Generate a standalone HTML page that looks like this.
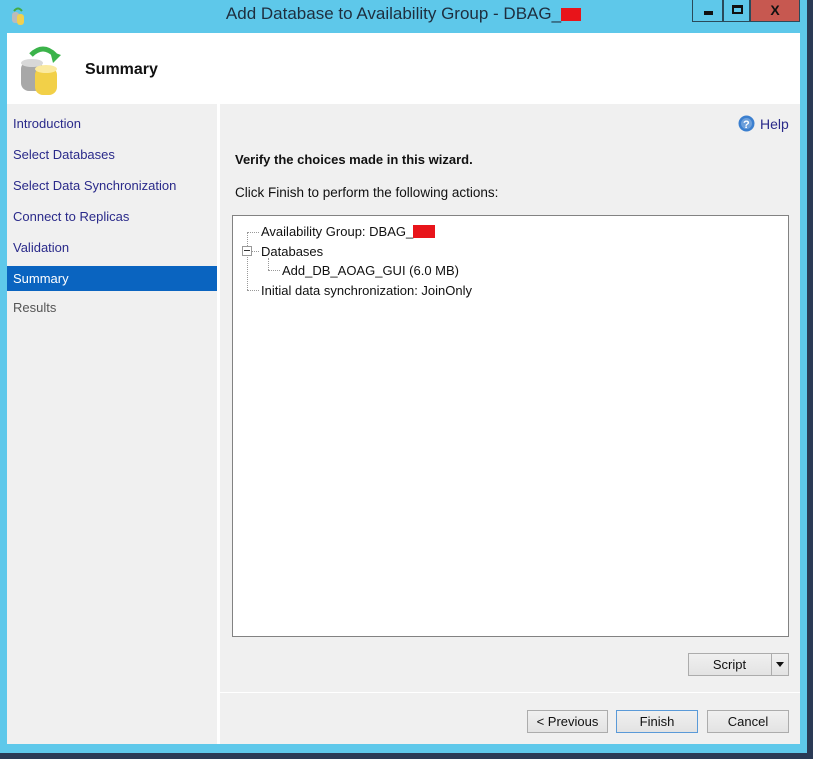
<!DOCTYPE html>
<html><head><meta charset="utf-8"><style>
*{margin:0;padding:0;box-sizing:border-box}
body{width:813px;height:759px;overflow:hidden;background:#2a3a55;font-family:"Liberation Sans",sans-serif;position:relative}
.win{position:absolute;left:0;top:0;width:807px;height:753px;background:#5ec8ea}
.title{position:absolute;left:0;top:4px;width:807px;text-align:center;font-size:17px;color:#1e2e3e}
.red{display:inline-block;background:#e8141a;vertical-align:middle}
.cb{position:absolute;top:0;height:22px;border:1px solid #2a4a5a;border-top:none}
.client{position:absolute;left:7px;top:33px;width:793px;height:711px;background:#f0f0f0}
.hdr{position:absolute;left:0;top:0;width:793px;height:71px;background:#fff}
.nav{position:absolute;left:0;top:71px;width:210px;height:640px;background:#f0f0f0}
.nav div{height:31px;line-height:31px;padding-left:6px;font-size:13px;color:#2a2a8a}
.sep{position:absolute;left:210px;top:71px;width:3px;height:640px;background:#fff}
.main{position:absolute;left:213px;top:71px;width:580px;height:640px}
.btn{position:absolute;height:23px;border:1px solid #acacac;background:linear-gradient(#f0f0f0,#e3e3e3);font-size:13px;text-align:center;line-height:21px;color:#111}
.t{position:absolute;font-size:13px;color:#111;white-space:nowrap}
.dot{position:absolute;border-color:#999;border-style:dotted;border-width:0}
</style></head><body>
<div class="win">
<svg style="position:absolute;left:10px;top:6px" width="16" height="20"><rect x="2" y="6" width="7" height="11" rx="3" fill="#bbb"/><rect x="7" y="8" width="7" height="11" rx="3" fill="#f0d050"/><path d="M4 5 Q8 0 12 5" stroke="#4a4" stroke-width="2" fill="none"/></svg>
<div class="title">Add Database to Availability Group - DBAG_<span class="red" style="width:20px;height:13px"></span></div>
<div class="cb" style="left:692px;width:31px;background:#5ec8ea"><div style="position:absolute;left:11px;top:11px;width:9px;height:4px;background:#111"></div></div>
<div class="cb" style="left:723px;width:27px;background:#5ec8ea"><div style="position:absolute;left:8px;top:5px;width:11px;height:9px;border:2px solid #111;border-top-width:3px"></div></div>
<div class="cb" style="left:750px;width:50px;background:#c75850;text-align:center;font-weight:bold;font-size:14px;line-height:21px;color:#111">X</div>
<div class="client">
 <div class="hdr">
  <svg style="position:absolute;left:10px;top:8px" width="50" height="56"><path d="M14 14 Q26 2 38 14" stroke="#3bb34a" stroke-width="5" fill="none"/><path d="M33 10 L44 14 L36 22Z" fill="#3bb34a"/><rect x="4" y="20" width="22" height="30" rx="8" fill="#a8a8a8"/><ellipse cx="15" cy="22" rx="11" ry="4" fill="#d8d8d8"/><rect x="18" y="26" width="22" height="28" rx="8" fill="#f2d048"/><ellipse cx="29" cy="28" rx="11" ry="4" fill="#fbeaa0"/></svg>
  <div class="t" style="left:78px;top:28px;font-weight:bold;font-size:16px">Summary</div>
 </div>
 <div class="nav">
  <div style="margin-top:4px">Introduction</div><div>Select Databases</div><div>Select Data Synchronization</div><div>Connect to Replicas</div><div>Validation</div>
  <div style="background:#0a64c0;color:#fff;height:25px;line-height:25px;margin-top:3px">Summary</div>
  <div style="color:#555;margin-top:1px">Results</div>
 </div>
 <div class="sep"></div>
 <div class="main">
  <svg style="position:absolute;left:518px;top:11px" width="17" height="17"><circle cx="8.5" cy="8.5" r="8" fill="#3b7fcf"/><circle cx="8.5" cy="8.5" r="5.5" fill="#fff" opacity=".25"/><text x="5" y="13" font-size="11" font-weight="bold" fill="#fff" font-family="Liberation Sans">?</text></svg>
  <div class="t" style="left:540px;top:12px;color:#2a2a8a;font-size:14px">Help</div>
  <div class="t" style="left:15px;top:48px;font-weight:bold">Verify the choices made in this wizard.</div>
  <div class="t" style="left:15px;top:81px;font-size:13.5px">Click Finish to perform the following actions:</div>
  <div style="position:absolute;left:12px;top:111px;width:557px;height:422px;background:#fff;border:1px solid #828282">
   <div class="dot" style="left:14px;top:16px;height:58px;border-left-width:1px"></div>
   <div class="dot" style="left:14px;top:16px;width:12px;border-top-width:1px"></div>
   <div class="dot" style="left:14px;top:74px;width:12px;border-top-width:1px"></div>
   <div class="dot" style="left:35px;top:42px;height:12px;border-left-width:1px"></div>
   <div class="dot" style="left:35px;top:54px;width:12px;border-top-width:1px"></div>
   <div style="position:absolute;left:9px;top:30px;width:10px;height:10px;border:1px solid #999;background:#fff"><div style="position:absolute;left:1px;top:3px;width:6px;height:1px;background:#333"></div></div>
   <div class="dot" style="left:19px;top:35px;width:7px;border-top-width:1px"></div>
   <div class="t" style="left:28px;top:8px">Availability Group: DBAG_<span class="red" style="width:22px;height:13px;margin-top:-3px"></span></div>
   <div class="t" style="left:28px;top:28px">Databases</div>
   <div class="t" style="left:49px;top:47px">Add_DB_AOAG_GUI (6.0 MB)</div>
   <div class="t" style="left:28px;top:67px">Initial data synchronization: JoinOnly</div>
  </div>
  <div class="btn" style="left:468px;top:549px;width:101px;padding-right:18px">Script<div style="position:absolute;right:0;top:0;width:17px;height:21px;border-left:1px solid #acacac"><div style="position:absolute;left:4px;top:8px;border:4px solid transparent;border-top:5px solid #111"></div></div></div>
  <div style="position:absolute;left:0;top:588px;width:580px;height:1px;background:#fff"></div>
  <div class="btn" style="left:307px;top:606px;width:81px">&lt; Previous</div>
  <div class="btn" style="left:396px;top:606px;width:82px;border-color:#5a9ad8">Finish</div>
  <div class="btn" style="left:487px;top:606px;width:82px">Cancel</div>
 </div>
</div>
</div>
</body></html>
